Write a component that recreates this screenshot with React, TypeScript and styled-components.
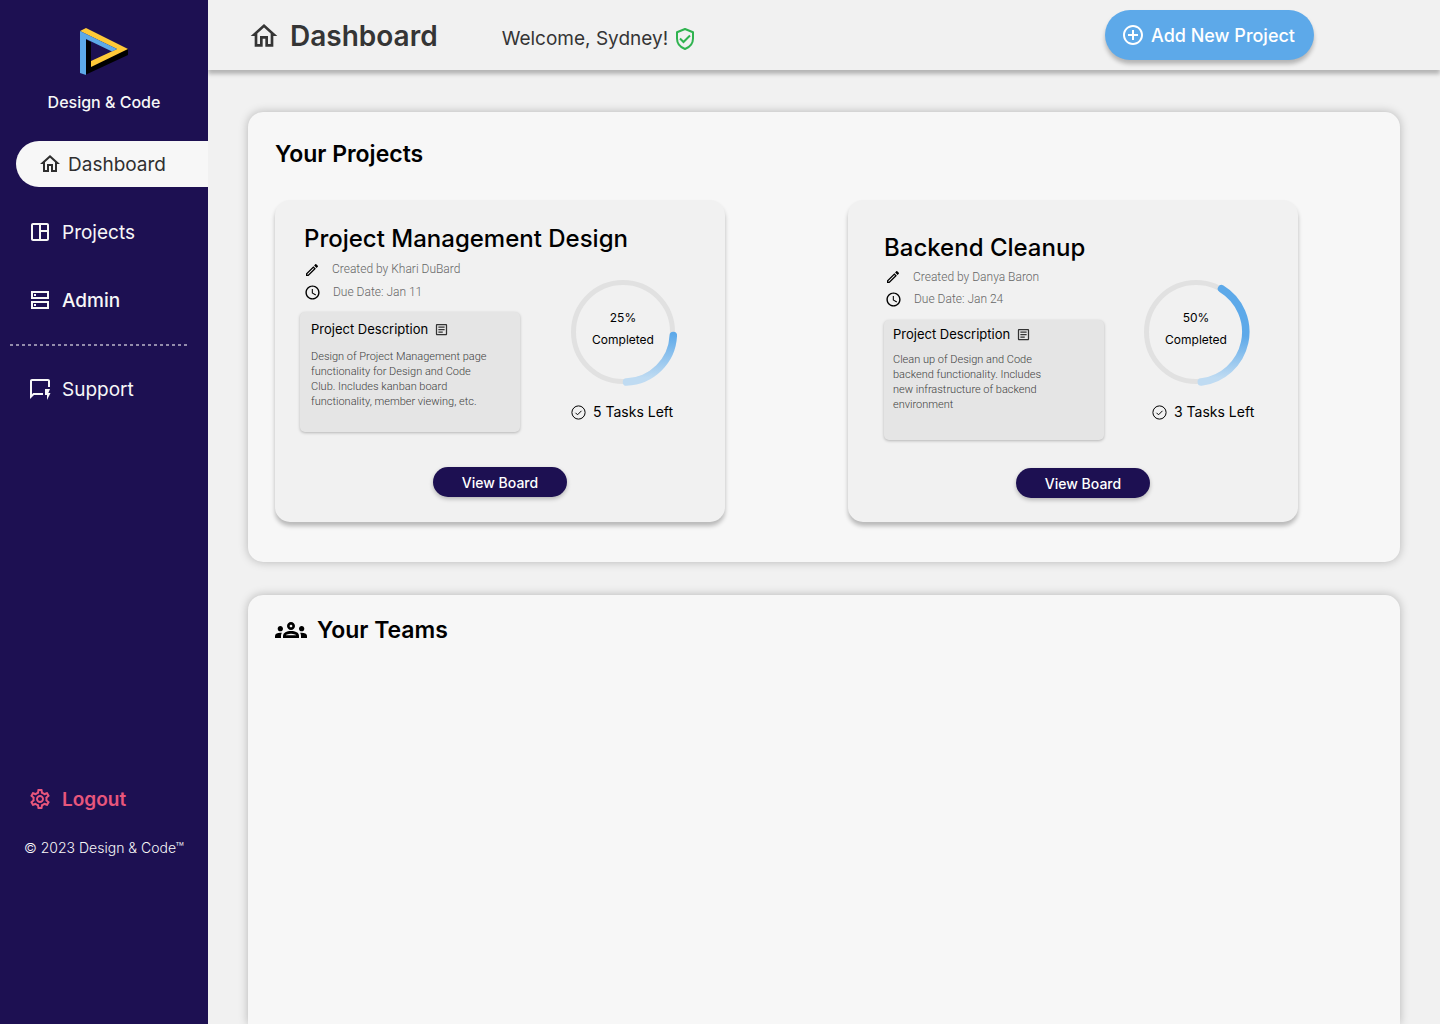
import React from "react";
import styled, { createGlobalStyle } from "styled-components";
import {
  MdAddCircleOutline,
  MdAccessTime,
  MdOutlineArticle,
  MdOutlineEdit,
  MdOutlineGroups,
  MdOutlineHome,
  MdOutlineQuickreply,
  MdOutlineSettings,
  MdOutlineSpaceDashboard,
} from "react-icons/md";

const GlobalStyle = createGlobalStyle`
  *, *::before, *::after { box-sizing: border-box; }
  body {
    margin: 0;
    background: #f1f1f1;
    font-family: Inter, "Liberation Sans", sans-serif;
    color: #000;
  }
  h1, h2, h3, h4, p { margin: 0; }
  button { font-family: inherit; border: 0; cursor: pointer; }
  svg { display: block; flex: none; }
`;

const Shell = styled.div`
  display: flex;
  min-height: 100vh;
`;

const Sidebar = styled.aside`
  flex: 0 0 208px;
  z-index: 1;
  display: flex;
  flex-direction: column;
  background: #1d1052;
  color: #f7f7f7;
`;

const Brand = styled.div`
  display: flex;
  flex-direction: column;
  align-items: center;
  gap: 15px;
  padding: 28px 0;
  font-size: 16px;
  font-weight: 500;
  line-height: 22px;
`;

const Nav = styled.nav`
  display: flex;
  flex-direction: column;
  gap: 22px;
`;

const NavItem = styled.a<{ $active?: boolean; $weight?: number; $color?: string }>`
  display: flex;
  align-items: center;
  gap: ${(p) => (p.$active ? 6 : 10)}px;
  height: 46px;
  margin-left: ${(p) => (p.$active ? 16 : 0)}px;
  padding-left: ${(p) => (p.$active ? 22 : 28)}px;
  border-radius: 23px 0 0 23px;
  background: ${(p) => (p.$active ? "#f7f7f7" : "transparent")};
  color: ${(p) => (p.$active ? "#2f2f2f" : p.$color ?? "#f7f7f7")};
  font-size: 19px;
  font-weight: ${(p) => p.$weight ?? 400};
  text-decoration: none;
`;

const Divider = styled.hr`
  width: 180px;
  height: 2px;
  margin: -1px 0 -2px 10px;
  border: 0;
  background: repeating-linear-gradient(90deg, #938cab 0 3px, transparent 3px 6px);
`;

const SidebarFooter = styled.div`
  margin-top: 364px;
`;

const Copyright = styled.p`
  margin-top: 16px;
  text-align: center;
  font-size: 14px;
  font-weight: 300;
  line-height: 20px;
`;

const Page = styled.div`
  flex: 1;
  min-width: 0;
  display: flex;
  flex-direction: column;
`;

const Header = styled.header`
  display: flex;
  align-items: center;
  height: 70px;
  padding: 0 126px 0 40px;
  background: #f1f1f1;
  box-shadow: 0 4px 4px rgba(0, 0, 0, 0.25);
  color: #353535;
`;

const PageTitle = styled.h1`
  display: flex;
  align-items: center;
  gap: 10px;
  padding-top: 2px;
  font-size: 28px;
  font-weight: 600;
  line-height: 36px;
`;

const Welcome = styled.p`
  display: flex;
  align-items: center;
  gap: 6px;
  margin-left: 64px;
  padding-top: 8px;
  font-size: 19px;
  line-height: 28px;
`;

const AddButton = styled.button`
  display: flex;
  align-items: center;
  gap: 6px;
  height: 50px;
  margin-left: auto;
  padding: 0 19px 0 16px;
  border-radius: 25px;
  background: #5da9e9;
  box-shadow: 0 4px 4px rgba(0, 0, 0, 0.25);
  color: #fff;
  font-size: 18px;
  font-weight: 500;
`;

const Main = styled.main`
  flex: 1;
  display: flex;
  flex-direction: column;
  gap: 33px;
  padding: 42px 40px 0;
`;

const Panel = styled.section<{ $fill?: boolean }>`
  flex: ${(p) => (p.$fill ? "1 0 auto" : "none")};
  padding: ${(p) => (p.$fill ? "17px 27px 40px" : "24px 102px 40px 27px")};
  border-radius: ${(p) => (p.$fill ? "15px 15px 0 0" : "15px")};
  background: #f7f7f7;
  box-shadow: 0 0 10px rgba(0, 0, 0, 0.25);
`;

const PanelTitle = styled.h2`
  display: flex;
  align-items: center;
  gap: 10px;
  font-size: 23px;
  font-weight: 600;
  line-height: 36px;
`;

const Cards = styled.div`
  display: grid;
  grid-template-columns: repeat(2, minmax(0, 1fr));
  column-gap: 123px;
  margin-top: 28px;
`;

const Card = styled.article<{ $inset: boolean }>`
  display: flex;
  flex-direction: column;
  padding: ${(p) => (p.$inset ? "30px 16px 24px 36px" : "21px 25px 25px")};
  border-radius: 15px;
  background: #f1f1f1;
  box-shadow: 0 4px 4px rgba(0, 0, 0, 0.25);
`;

const CardTitle = styled.h3<{ $inset: boolean }>`
  padding-left: ${(p) => (p.$inset ? 0 : 4)}px;
  font-size: 24px;
  font-weight: 500;
  line-height: 36px;
  white-space: nowrap;
`;

const CardBody = styled.div<{ $inset: boolean }>`
  display: flex;
  align-items: flex-start;
  gap: ${(p) => (p.$inset ? 40 : 51)}px;
`;

const Details = styled.div`
  flex: 0 1 220px;
  min-width: 0;
`;

const MetaList = styled.div<{ $inset: boolean }>`
  padding: ${(p) => (p.$inset ? "0 0 10px 1px" : "1px 0 8px 4px")};
  color: #666;
  font-family: Roboto, "Liberation Sans", sans-serif;
  font-size: 12px;
  font-weight: 300;
  line-height: ${(p) => (p.$inset ? 22 : 23)}px;
`;

const Meta = styled.p`
  display: flex;
  align-items: center;
  gap: 12px;
  svg { color: #000; }
`;

const Description = styled.section<{ $inset: boolean }>`
  min-height: 120px;
  padding: ${(p) => (p.$inset ? "4px 55px 8px 9px" : "7px 30px 8px 11px")};
  border-radius: 5px;
  background: #e5e5e5;
  box-shadow: 0 1px 3px rgba(0, 0, 0, 0.25);
`;

const DescriptionTitle = styled.h4<{ $inset: boolean }>`
  display: flex;
  align-items: center;
  gap: 6px;
  margin-bottom: ${(p) => (p.$inset ? 8 : 10)}px;
  font-size: 13px;
  font-weight: 400;
  line-height: 20px;
  white-space: nowrap;
  svg { color: #333; }
`;

const DescriptionText = styled.p`
  color: #404040;
  font-family: Roboto, "Liberation Sans", sans-serif;
  font-size: 11px;
  font-weight: 300;
  line-height: 15px;
`;

const Progress = styled.div<{ $inset: boolean }>`
  padding-top: ${(p) => (p.$inset ? 14 : 23)}px;
`;

const Ring = styled.div`
  display: grid;
  width: 106px;
  > * { grid-area: 1 / 1; }
`;

const RingLabel = styled.p`
  align-self: center;
  padding: 0 2px 8px 0;
  text-align: center;
  font-size: 12px;
  line-height: 22px;
`;

const Tasks = styled.p<{ $inset: boolean }>`
  display: flex;
  align-items: center;
  gap: 7px;
  margin-top: 16px;
  padding-left: ${(p) => (p.$inset ? 8 : 0)}px;
  font-size: 14px;
  line-height: 20px;
  white-space: nowrap;
`;

const ViewButton = styled.button<{ $inset: boolean }>`
  align-self: center;
  width: 134px;
  height: 30px;
  margin-top: ${(p) => (p.$inset ? 28 : 35)}px;
  border-radius: 15px;
  background: #1d1052;
  box-shadow: 0 2px 4px rgba(0, 0, 0, 0.25);
  color: #fff;
  font-size: 14px;
  font-weight: 500;
`;

function Logo() {
  return (
    <svg width="48" height="48" viewBox="0 0 48 48" aria-hidden="true">
      <path d="M5 47V11l6 3v24.500L43 22l5-1v6z" fill="#000" />
      <path d="M0 3l6-3 42 21-37 18v-6l26-12z" fill="#ffc938" />
      <path d="M0 3l37 18-5 2.500L6 11v36l-6-2z" fill="#5da9e9" />
    </svg>
  );
}

function AdminIcon() {
  return (
    <svg width="24" height="24" viewBox="0 0 24 24" fill="none" stroke="currentColor" strokeWidth="2" aria-hidden="true">
      <path d="M4 4h16v6H4zM4 14h16v6H4z" />
      <path d="M6 7h2M6 17h2" />
    </svg>
  );
}

function ShieldIcon() {
  return (
    <svg width="22" height="24" viewBox="0 0 22 24" fill="none" stroke="#2fb34f" strokeWidth="2" aria-hidden="true">
      <path d="M11 2l8 3.200v6.300c0 5-3.200 8.700-8 10.500-4.800-1.800-8-5.500-8-10.500V5.200z" strokeLinejoin="round" />
      <path d="M6 11.500l3.500 3.500L16 8.500" />
    </svg>
  );
}

function CheckIcon() {
  return (
    <svg width="15" height="15" viewBox="0 0 15 15" fill="none" stroke="#000" aria-hidden="true">
      <circle cx="7.500" cy="7.500" r="6.600" />
      <path d="M4.500 7.800l2 2 4-4" />
    </svg>
  );
}

function ProgressRing({ id, arc, from }: { id: string; arc: string; from: number }) {
  return (
    <svg width="106" height="106" viewBox="0 0 106 106" fill="none" aria-hidden="true">
      <defs>
        <linearGradient id={id} gradientUnits="userSpaceOnUse" x1="0" y1={from} x2="0" y2="98">
          <stop stopColor="#5da9e9" />
          <stop offset="1" stopColor="#bfdbf2" />
        </linearGradient>
      </defs>
      <circle cx="52" cy="52" r="49.500" stroke="#e1e1e1" strokeWidth="5" />
      <path d={arc} stroke={`url(#${id})`} strokeWidth="7.500" strokeLinecap="round" />
    </svg>
  );
}

interface Project {
  id: string;
  name: string;
  author: string;
  due: string;
  description: string;
  percent: number;
  tasks: number;
  arc: string;
  gradientStart: number;
  inset: boolean;
}

const projects: Project[] = [
  {
    id: "management",
    name: "Project Management Design",
    author: "Khari DuBard",
    due: "Jan 11",
    description:
      "Design of Project Management page functionality for Design and Code Club. Includes kanban board functionality, member viewing, etc.",
    percent: 25,
    tasks: 5,
    arc: "M102.300 55.500A48.500 48.500 0 0 1 55.500 102",
    gradientStart: 54,
    inset: false,
  },
  {
    id: "backend",
    name: "Backend Cleanup",
    author: "Danya Baron",
    due: "Jan 24",
    description:
      "Clean up of Design and Code backend functionality. Includes new infrastructure of backend environment",
    percent: 50,
    tasks: 3,
    arc: "M77.500 8.700A50.500 50.500 0 0 1 57.300 102",
    gradientStart: 56,
    inset: true,
  },
];

function ProjectCard({ project }: { project: Project }) {
  const { inset } = project;
  return (
    <Card $inset={inset}>
      <CardTitle $inset={inset}>{project.name}</CardTitle>
      <CardBody $inset={inset}>
        <Details>
          <MetaList $inset={inset}>
            <Meta>
              <MdOutlineEdit size={16} />
              Created by {project.author}
            </Meta>
            <Meta>
              <MdAccessTime size={17} />
              Due Date: {project.due}
            </Meta>
          </MetaList>
          <Description $inset={inset}>
            <DescriptionTitle $inset={inset}>
              Project Description
              <MdOutlineArticle size={15} />
            </DescriptionTitle>
            <DescriptionText>{project.description}</DescriptionText>
          </Description>
        </Details>
        <Progress $inset={inset}>
          <Ring>
            <ProgressRing id={project.id} arc={project.arc} from={project.gradientStart} />
            <RingLabel>
              {project.percent}%<br />
              Completed
            </RingLabel>
          </Ring>
          <Tasks $inset={inset}>
            <CheckIcon />
            {project.tasks} Tasks Left
          </Tasks>
        </Progress>
      </CardBody>
      <ViewButton type="button" $inset={inset}>
        View Board
      </ViewButton>
    </Card>
  );
}

export default function App() {
  return (
    <>
      <GlobalStyle />
      <Shell>
        <Sidebar>
          <Brand>
            <Logo />
            Design &amp; Code
          </Brand>
          <Nav>
            <NavItem href="#dashboard" $active>
              <MdOutlineHome size={24} />
              Dashboard
            </NavItem>
            <NavItem href="#projects">
              <MdOutlineSpaceDashboard size={24} />
              Projects
            </NavItem>
            <NavItem href="#admin" $weight={500}>
              <AdminIcon />
              Admin
            </NavItem>
            <Divider />
            <NavItem href="#support">
              <MdOutlineQuickreply size={24} />
              Support
            </NavItem>
          </Nav>
          <SidebarFooter>
            <NavItem href="#logout" $weight={600} $color="#e8567c">
              <MdOutlineSettings size={24} />
              Logout
            </NavItem>
            <Copyright>© 2023 Design &amp; Code™</Copyright>
          </SidebarFooter>
        </Sidebar>
        <Page>
          <Header>
            <PageTitle>
              <MdOutlineHome size={32} />
              Dashboard
            </PageTitle>
            <Welcome>
              Welcome, Sydney!
              <ShieldIcon />
            </Welcome>
            <AddButton type="button">
              <MdAddCircleOutline size={24} />
              Add New Project
            </AddButton>
          </Header>
          <Main>
            <Panel>
              <PanelTitle>Your Projects</PanelTitle>
              <Cards>
                {projects.map((project) => (
                  <ProjectCard key={project.id} project={project} />
                ))}
              </Cards>
            </Panel>
            <Panel $fill>
              <PanelTitle>
                <MdOutlineGroups size={32} />
                Your Teams
              </PanelTitle>
            </Panel>
          </Main>
        </Page>
      </Shell>
    </>
  );
}
